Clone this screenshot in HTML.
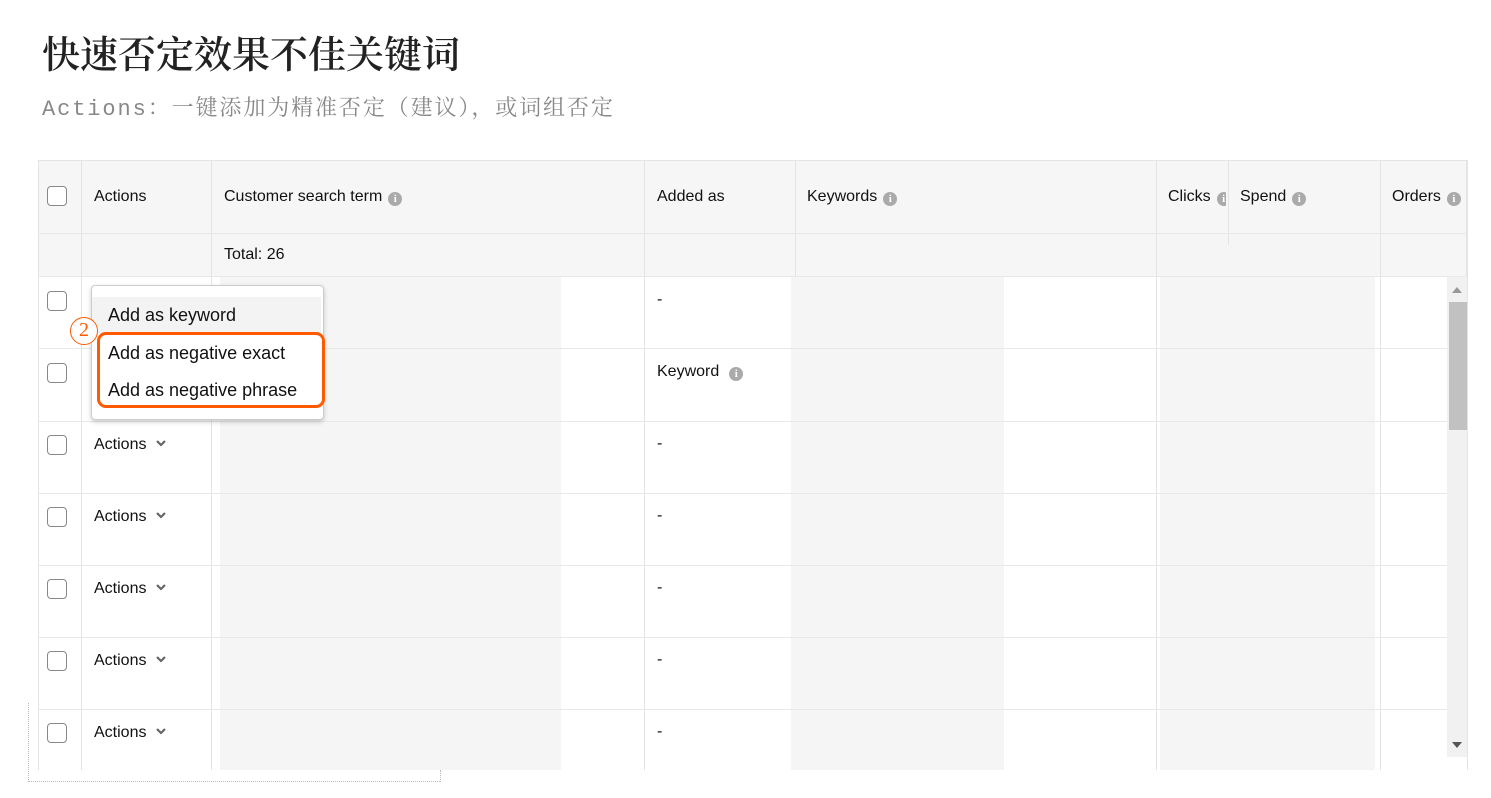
<!DOCTYPE html><html><head><meta charset="utf-8"><style>
body{margin:0;width:1491px;height:798px;background:#fff;position:relative;overflow:hidden;font-family:"Liberation Sans","Noto Sans CJK SC",sans-serif;}
.a{position:absolute}
.t{font-size:16px;color:#111}
.cb{position:absolute;width:20px;height:20px;border:1.5px solid #888;border-radius:4px;background:#fff;box-sizing:border-box}
.vl{position:absolute;width:1px;background:#e4e4e4}
.hl{position:absolute;height:1px;background:#e8e8e8}
.i{display:inline-block;width:14px;height:14px;border-radius:50%;background:#aaa;color:#fff;font-size:11px;line-height:14px;text-align:center;font-weight:bold;vertical-align:-1px;margin-left:6px;font-family:"Liberation Serif",serif}
.g{position:absolute;background:#f5f5f5}
.ch{display:inline-block;margin-left:10px;vertical-align:2px}
</style></head><body>
<div class="a" style="left:42px;top:24px;font-size:38px;color:#222;font-family:'Noto Serif CJK SC',serif;font-weight:600">快速否定效果不佳关键词</div>
<div class="a" style="left:42px;top:91px;font-size:22px;color:#888;font-family:'Liberation Mono','Noto Serif CJK SC',monospace;white-space:nowrap;letter-spacing:1.9px">Actions：一键添加为精准否定（建议），或词组否定</div>
<div class="a" style="left:38px;top:160px;width:1429px;height:116px;background:#f6f6f6;border:1px solid #e4e4e4;border-bottom:none;box-sizing:border-box"></div>
<div class="g" style="left:220px;top:276px;width:341px;height:494px"></div>
<div class="g" style="left:791px;top:276px;width:213px;height:494px"></div>
<div class="g" style="left:1160px;top:233px;width:215px;height:537px"></div>
<div class="vl" style="left:38px;top:160px;height:610px"></div>
<div class="vl" style="left:81px;top:160px;height:610px"></div>
<div class="vl" style="left:211px;top:160px;height:610px"></div>
<div class="vl" style="left:644px;top:160px;height:610px"></div>
<div class="vl" style="left:795px;top:160px;height:116px"></div>
<div class="vl" style="left:1156px;top:160px;height:610px"></div>
<div class="vl" style="left:1228px;top:160px;height:85px"></div>
<div class="vl" style="left:1380px;top:160px;height:610px"></div>
<div class="vl" style="left:1467px;top:160px;height:610px"></div>
<div class="hl" style="left:38px;top:233px;width:1429px"></div>
<div class="hl" style="left:38px;top:276px;width:1429px"></div>
<div class="hl" style="left:38px;top:348px;width:1410px"></div>
<div class="hl" style="left:38px;top:421px;width:1410px"></div>
<div class="hl" style="left:38px;top:493px;width:1410px"></div>
<div class="hl" style="left:38px;top:565px;width:1410px"></div>
<div class="hl" style="left:38px;top:637px;width:1410px"></div>
<div class="hl" style="left:38px;top:709px;width:1410px"></div>
<div class="cb" style="left:47px;top:186px"></div>
<div class="a t" style="left:94px;top:188px">Actions</div>
<div class="a t" style="left:224px;top:188px">Customer search term<span class="i">i</span></div>
<div class="a t" style="left:657px;top:188px">Added as</div>
<div class="a t" style="left:807px;top:188px">Keywords<span class="i">i</span></div>
<div class="a t" style="left:1168px;top:188px;width:58px;overflow:hidden;white-space:nowrap">Clicks<span class="i">i</span></div>
<div class="a t" style="left:1240px;top:188px">Spend<span class="i">i</span></div>
<div class="a t" style="left:1392px;top:188px;white-space:nowrap">Orders<span class="i">i</span></div>
<div class="a t" style="left:224px;top:246px">Total: 26</div>
<div class="cb" style="left:47px;top:291px"></div>
<div class="cb" style="left:47px;top:363px"></div>
<div class="a t" style="left:657px;top:291px">-</div>
<div class="a t" style="left:657px;top:363px">Keyword<span class="i" style="margin-left:10px">i</span></div>
<div class="cb" style="left:47px;top:435px"></div><div class="a t" style="left:94px;top:436px">Actions<svg class="ch" width="10" height="7" viewBox="0 0 10 7"><path d="M1 1L5 5L9 1" stroke="#666" stroke-width="2.2" fill="none"/></svg></div><div class="a t" style="left:657px;top:435px">-</div>
<div class="cb" style="left:47px;top:507px"></div><div class="a t" style="left:94px;top:508px">Actions<svg class="ch" width="10" height="7" viewBox="0 0 10 7"><path d="M1 1L5 5L9 1" stroke="#666" stroke-width="2.2" fill="none"/></svg></div><div class="a t" style="left:657px;top:507px">-</div>
<div class="cb" style="left:47px;top:579px"></div><div class="a t" style="left:94px;top:580px">Actions<svg class="ch" width="10" height="7" viewBox="0 0 10 7"><path d="M1 1L5 5L9 1" stroke="#666" stroke-width="2.2" fill="none"/></svg></div><div class="a t" style="left:657px;top:579px">-</div>
<div class="cb" style="left:47px;top:651px"></div><div class="a t" style="left:94px;top:652px">Actions<svg class="ch" width="10" height="7" viewBox="0 0 10 7"><path d="M1 1L5 5L9 1" stroke="#666" stroke-width="2.2" fill="none"/></svg></div><div class="a t" style="left:657px;top:651px">-</div>
<div class="cb" style="left:47px;top:723px"></div><div class="a t" style="left:94px;top:724px">Actions<svg class="ch" width="10" height="7" viewBox="0 0 10 7"><path d="M1 1L5 5L9 1" stroke="#666" stroke-width="2.2" fill="none"/></svg></div><div class="a t" style="left:657px;top:723px">-</div>
<div class="a" style="left:1447px;top:277px;width:20px;height:480px;background:#f1f1f1"></div>
<div class="a" style="left:1449px;top:302px;width:18px;height:128px;background:#c1c1c1"></div>
<div class="a" style="left:1452px;top:287px;width:0;height:0;border-left:5px solid transparent;border-right:5px solid transparent;border-bottom:6px solid #999"></div>
<div class="a" style="left:1452px;top:742px;width:0;height:0;border-left:5px solid transparent;border-right:5px solid transparent;border-top:6px solid #555"></div>
<div class="a" style="left:0;top:770px;width:1491px;height:28px;background:#fff"></div>
<div class="a" style="left:28px;top:703px;height:79px;border-left:1px dotted #bbb"></div>
<div class="a" style="left:28px;top:781px;width:412px;border-top:1px dotted #bbb"></div>
<div class="a" style="left:440px;top:770px;height:12px;border-left:1px dotted #bbb"></div>
<div class="a" style="left:91px;top:285px;width:231px;height:133px;background:#fff;border:1px solid #ccc;border-radius:4px;box-shadow:0 2px 5px rgba(0,0,0,.2)"></div>
<div class="a" style="left:92px;top:297px;width:229px;height:37px;background:#f3f3f3"></div>
<div class="a" style="left:108px;top:305px;font-size:18px;color:#111">Add as keyword</div>
<div class="a" style="left:108px;top:343px;font-size:18px;color:#111">Add as negative exact</div>
<div class="a" style="left:108px;top:380px;font-size:18px;color:#111">Add as negative phrase</div>
<div class="a" style="left:97px;top:332px;width:228px;height:76px;border:3px solid #ff5a00;border-radius:9px;box-sizing:border-box"></div>
<div class="a" style="left:70px;top:317px;width:28px;height:28px;border:1.5px solid #ff5a00;border-radius:50%;box-sizing:border-box;background:#fff;color:#ff5a00;font-size:20px;line-height:25px;text-align:center;font-family:'Liberation Serif',serif">2</div>
</body></html>
